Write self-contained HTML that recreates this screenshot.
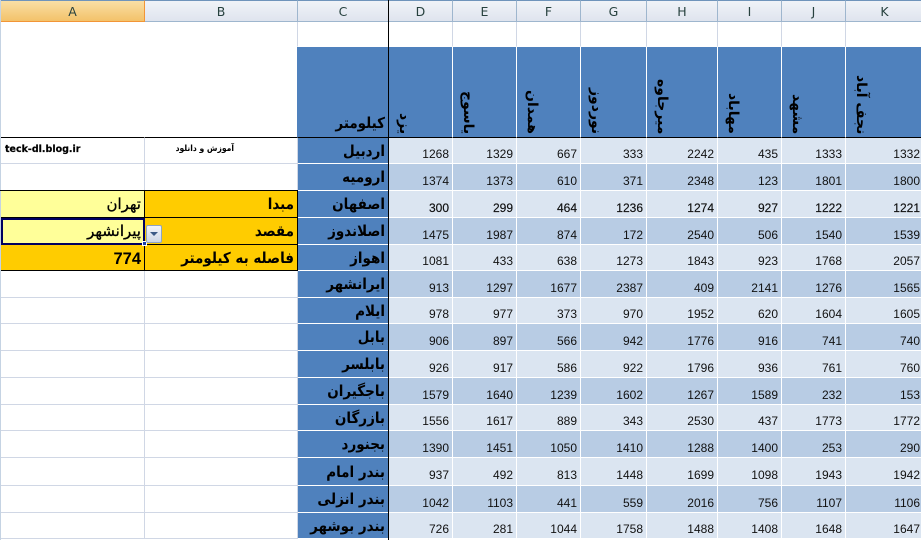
<!DOCTYPE html>
<html><head><meta charset="utf-8">
<style>
html,body{margin:0;padding:0;width:921px;height:540px;overflow:hidden;background:#fff}
#w{position:relative;width:921px;height:540px;overflow:hidden}
table{position:absolute;left:1px;top:0;border-collapse:separate;border-spacing:0;table-layout:fixed;width:923px}
td{padding:0;box-sizing:border-box;border-right:1px solid #d0d7e5;border-bottom:1px solid #d0d7e5;overflow:hidden;white-space:nowrap;position:relative}
tr.h td{background:linear-gradient(#f0f3f8,#dfe4ee);border-right:1px solid #9eb6ce;border-bottom:1px solid #9eb6ce;border-top:1px solid #6f94bb;text-align:center;font:12.5px "DejaVu Sans","Liberation Sans",sans-serif;color:#27413e;font-weight:400}
tr.h td.sel{background:linear-gradient(#f9dfa5,#f3c26a);border-right:1px solid #f29536;border-bottom:1px solid #f29536}
td.c{background:#4f81bd;border-right:1px solid #000;border-bottom:1px solid #fff;text-align:right;direction:rtl;font:bold 15px "DejaVu Sans",sans-serif;font-stretch:condensed;color:#000;padding-right:3px;line-height:14px}
td.v{background:#4f81bd;border-right:1px solid #fff;border-bottom:1px solid #000}
td.n{font:12px "Liberation Sans",sans-serif;color:#111;text-align:right;padding:7px 3px 0 0;border-right:1px solid #fff;border-bottom:1px solid #fff;line-height:14px}
tr.a td.n{background:#dbe5f1}
tr.b td.n{background:#b8cce4}
tr.k td.n{-webkit-text-stroke:.15px #000}
.r{position:absolute;left:7px;bottom:3px;writing-mode:vertical-rl;font:bold 14px/16px "DejaVu Sans",sans-serif;color:#000;direction:rtl;white-space:nowrap}
td.o{background:#fc0;border-right:1px solid #000;border-bottom:1px solid #000;text-align:right;direction:rtl;font:bold 15px "DejaVu Sans",sans-serif;font-stretch:condensed;color:#000;padding-right:3px}
td.y{background:#ff9;border-right:1px solid #000;border-bottom:1px solid #000;text-align:right;direction:rtl;font:15px "DejaVu Sans",sans-serif;-webkit-text-stroke:.3px #000;color:#000;padding-right:3px}
.l{position:absolute;background:#000}
</style></head><body><div id="w">
<div style="position:absolute;left:0;top:0;width:1px;height:540px;background:#c5d3e3"></div>
<table>
<colgroup><col style="width:144px"><col style="width:153px"><col style="width:91px"><col style="width:64px"><col style="width:64px"><col style="width:64px"><col style="width:66px"><col style="width:71px"><col style="width:64px"><col style="width:64px"><col style="width:78px"></colgroup>
<tr class="h" style="height:22px"><td class="sel">A</td><td>B</td><td style="border-right-color:#000">C</td><td>D</td><td>E</td><td>F</td><td>G</td><td>H</td><td>I</td><td>J</td><td>K</td></tr>
<tr style="height:25px"><td style="border-bottom-color:#fff;border-right-color:#fff"></td><td style="border-bottom-color:#fff;border-right-color:#d0d7e5"></td><td style="border-right-color:#000;border-bottom-color:#fff"></td><td style="border-bottom-color:#fff"></td><td style="border-bottom-color:#fff"></td><td style="border-bottom-color:#fff"></td><td style="border-bottom-color:#fff"></td><td style="border-bottom-color:#fff"></td><td style="border-bottom-color:#fff"></td><td style="border-bottom-color:#fff"></td><td style="border-bottom-color:#fff"></td></tr>
<tr style="height:91px"><td style="border-bottom:1px solid #000;border-right-color:#fff"></td><td style="border-bottom:1px solid #000;border-right-color:#4f81bd"></td>
<td class="c" style="border-bottom-color:#000;vertical-align:bottom;padding-bottom:7px">کیلومتر</td>
<td class="v"><span class="r">یزد</span></td><td class="v"><span class="r">یاسوج</span></td><td class="v"><span class="r">همدان</span></td><td class="v"><span class="r">نوردوز</span></td><td class="v"><span class="r">میرجاوه</span></td><td class="v"><span class="r">مهاباد</span></td><td class="v"><span class="r">مشهد</span></td><td class="v"><span class="r">نجف آباد</span></td></tr>
<tr class="a" style="height:26px"><td style="font:bold 9.5px 'DejaVu Sans',sans-serif;-webkit-text-stroke:.2px #000;padding:0 0 3px 4px;color:#000">teck-dl.blog.ir</td><td style="direction:rtl;text-align:right;font:bold 8.5px 'DejaVu Sans',sans-serif;font-stretch:condensed;padding:0 63px 3px 0;color:#000">آموزش و دانلود</td><td class="c">اردبیل</td><td class="n">1268</td><td class="n">1329</td><td class="n">667</td><td class="n">333</td><td class="n">2242</td><td class="n">435</td><td class="n">1333</td><td class="n">1332</td></tr>
<tr class="b" style="height:27px"><td></td><td></td><td class="c">ارومیه</td><td class="n">1374</td><td class="n">1373</td><td class="n">610</td><td class="n">371</td><td class="n">2348</td><td class="n">123</td><td class="n">1801</td><td class="n">1800</td></tr>
<tr class="a k" style="height:27px"><td class="y">تهران</td><td class="o">مبدا</td><td class="c">اصفهان</td><td class="n">300</td><td class="n">299</td><td class="n">464</td><td class="n">1236</td><td class="n">1274</td><td class="n">927</td><td class="n">1222</td><td class="n">1221</td></tr>
<tr class="b" style="height:27px"><td class="y">پیرانشهر</td><td class="o">مقصد</td><td class="c">اصلاندوز</td><td class="n">1475</td><td class="n">1987</td><td class="n">874</td><td class="n">172</td><td class="n">2540</td><td class="n">506</td><td class="n">1540</td><td class="n">1539</td></tr>
<tr class="a" style="height:26px"><td class="o" style="padding:3px 3px 0 0;font:bold 16.5px 'Liberation Sans',sans-serif">774</td><td class="o">فاصله به کیلومتر</td><td class="c">اهواز</td><td class="n">1081</td><td class="n">433</td><td class="n">638</td><td class="n">1273</td><td class="n">1843</td><td class="n">923</td><td class="n">1768</td><td class="n">2057</td></tr>
<tr class="b" style="height:27px"><td></td><td></td><td class="c">ایرانشهر</td><td class="n">913</td><td class="n">1297</td><td class="n">1677</td><td class="n">2387</td><td class="n">409</td><td class="n">2141</td><td class="n">1276</td><td class="n">1565</td></tr>
<tr class="a" style="height:26px"><td></td><td></td><td class="c">ایلام</td><td class="n">978</td><td class="n">977</td><td class="n">373</td><td class="n">970</td><td class="n">1952</td><td class="n">620</td><td class="n">1604</td><td class="n">1605</td></tr>
<tr class="b" style="height:27px"><td></td><td></td><td class="c">بابل</td><td class="n">906</td><td class="n">897</td><td class="n">566</td><td class="n">942</td><td class="n">1776</td><td class="n">916</td><td class="n">741</td><td class="n">740</td></tr>
<tr class="a" style="height:27px"><td></td><td></td><td class="c">بابلسر</td><td class="n">926</td><td class="n">917</td><td class="n">586</td><td class="n">922</td><td class="n">1796</td><td class="n">936</td><td class="n">761</td><td class="n">760</td></tr>
<tr class="b" style="height:27px"><td></td><td></td><td class="c">باجگیران</td><td class="n">1579</td><td class="n">1640</td><td class="n">1239</td><td class="n">1602</td><td class="n">1267</td><td class="n">1589</td><td class="n">232</td><td class="n">153</td></tr>
<tr class="a" style="height:26px"><td></td><td></td><td class="c">بازرگان</td><td class="n">1556</td><td class="n">1617</td><td class="n">889</td><td class="n">343</td><td class="n">2530</td><td class="n">437</td><td class="n">1773</td><td class="n">1772</td></tr>
<tr class="b" style="height:27px"><td></td><td></td><td class="c">بجنورد</td><td class="n">1390</td><td class="n">1451</td><td class="n">1050</td><td class="n">1410</td><td class="n">1288</td><td class="n">1400</td><td class="n">253</td><td class="n">290</td></tr>
<tr class="a" style="height:28px"><td></td><td></td><td class="c">بندر امام</td><td class="n">937</td><td class="n">492</td><td class="n">813</td><td class="n">1448</td><td class="n">1699</td><td class="n">1098</td><td class="n">1943</td><td class="n">1942</td></tr>
<tr class="b" style="height:27px"><td></td><td></td><td class="c">بندر انزلی</td><td class="n">1042</td><td class="n">1103</td><td class="n">441</td><td class="n">559</td><td class="n">2016</td><td class="n">756</td><td class="n">1107</td><td class="n">1106</td></tr>
<tr class="a" style="height:26px"><td></td><td></td><td class="c">بندر بوشهر</td><td class="n">726</td><td class="n">281</td><td class="n">1044</td><td class="n">1758</td><td class="n">1488</td><td class="n">1408</td><td class="n">1648</td><td class="n">1647</td></tr>
</table>
<div class="l" style="left:388px;top:0;width:1px;height:540px"></div>
<div class="l" style="left:0;top:190px;width:298px;height:1px"></div>
<div style="position:absolute;left:1px;top:218px;width:140px;height:23px;border:2px solid #000060"></div>
<div style="position:absolute;left:142px;top:241px;width:5px;height:5px;background:#1a3fa8;border:1px solid #fff;box-sizing:border-box"></div>
<div style="position:absolute;left:146px;top:225px;width:16px;height:18px;box-sizing:border-box;border:1px solid #8ea4c4;border-radius:2px;background:linear-gradient(#f2f5fa,#cdd6e6)"></div>
<div style="position:absolute;left:150px;top:232px;width:0;height:0;border-left:4px solid transparent;border-right:4px solid transparent;border-top:4px solid #3b5a86"></div>
</div></body></html>
